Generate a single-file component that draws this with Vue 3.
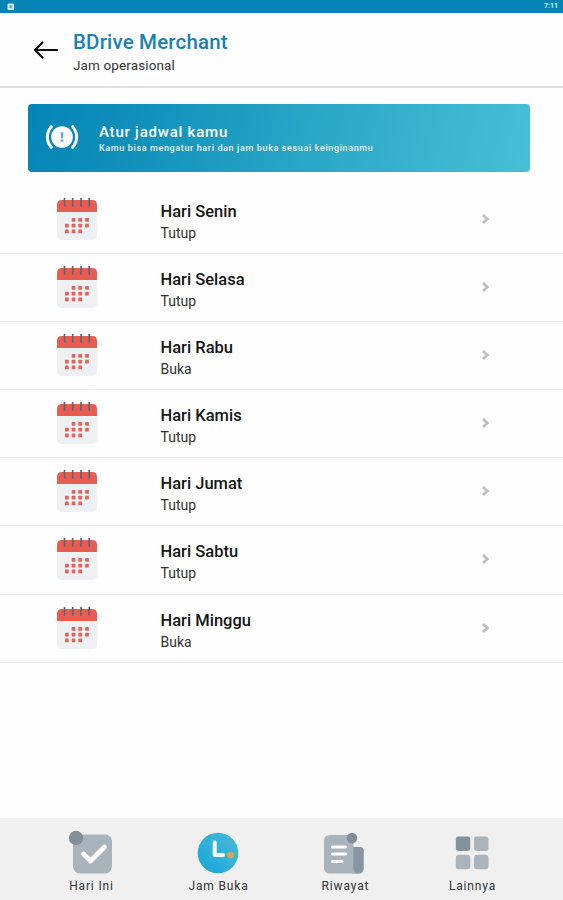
<script setup>
const days = [
  { name: 'Senin', status: 'Tutup' },
  { name: 'Selasa', status: 'Tutup' },
  { name: 'Rabu', status: 'Buka' },
  { name: 'Kamis', status: 'Tutup' },
  { name: 'Jumat', status: 'Tutup' },
  { name: 'Sabtu', status: 'Tutup' },
  { name: 'Minggu', status: 'Buka' },
]
const dots = [
  [15.7, 19], [22.4, 19], [29.1, 19],
  [9, 24.8], [15.7, 24.8], [22.4, 24.8], [29.1, 24.8],
  [9, 30.5], [15.7, 30.5], [22.4, 30.5],
]
const rings = [8.5, 16.7, 25, 33.2]
</script>

<template>
  <div class="screen">
    <div class="status">
      <svg class="status-icon" viewBox="0 0 8 8">
        <rect x="0.5" y="0.5" width="6.6" height="6.6" rx="1.3" fill="#d9f0f8" />
        <rect x="2.5" y="2.5" width="2.6" height="2.6" fill="#55abc9" />
      </svg>
      <span class="time">7:11</span>
    </div>

    <header class="header">
      <svg class="back" viewBox="0 0 26 20">
        <path d="M24 10H2M9.500 2.500L2 10l7.500 7.500" fill="none" stroke="#080808" stroke-width="2.200" stroke-linecap="round" stroke-linejoin="round" />
      </svg>
      <div class="heading">
        <h1>BDrive Merchant</h1>
        <p>Jam operasional</p>
      </div>
    </header>

    <section class="banner">
      <svg class="alert" viewBox="0 0 34 26">
        <circle cx="17" cy="13" r="10.800" fill="#fff" />
        <path d="M6.300 2.700A15.500 15.500 0 0 0 6.300 23.300M27.700 2.700A15.500 15.500 0 0 1 27.700 23.300" fill="none" stroke="#fff" stroke-width="3" stroke-linecap="round" />
        <path d="M15.500 8.200h3l-.5 5.700h-2zM15.600 15.500h2.800v2.300h-2.800z" fill="#5faeca" />
      </svg>
      <div class="banner-text">
        <h2>Atur jadwal kamu</h2>
        <p>Kamu bisa mengatur hari dan jam buka sesuai keinginanmu</p>
      </div>
    </section>

    <main class="list">
      <div v-for="day in days" :key="day.name" class="row">
        <svg class="calendar" viewBox="0 0 42 44">
          <path d="M1 14H41V38q0 5-5 5H6q-5 0-5-5z" fill="#edf1f3" />
          <path d="M1 15V8q0-5 5-5H36q5 0 5 5v7z" fill="#e85d50" />
          <path v-for="x in rings" :key="x" :d="`M${x} 1.500V9`" stroke="#656274" stroke-width="1.700" stroke-linecap="round" />
          <rect v-for="(dot, i) in dots" :key="'d' + i" :x="dot[0]" :y="dot[1] + 2" width="3.700" height="3.700" rx="0.500" fill="#e06458" />
        </svg>
        <div class="day">
          <h3>Hari {{ day.name }}</h3>
          <p>{{ day.status }}</p>
        </div>
        <svg class="chevron" viewBox="0 0 10 12">
          <path d="M2 2l4.300 4L2 10" fill="none" stroke="#bebebe" stroke-width="2.800" />
        </svg>
      </div>
    </main>

    <nav class="nav">
      <div class="tab">
        <svg viewBox="0 0 46 46">
          <rect x="5" y="4.500" width="39" height="39" rx="7" fill="#a9b3bb" />
          <circle cx="8" cy="8" r="7.200" fill="#808f9a" />
          <path d="M15.500 24l7 7L36.500 17" fill="none" stroke="#fff" stroke-width="4.800" stroke-linecap="round" stroke-linejoin="round" />
        </svg>
        <span>Hari Ini</span>
      </div>
      <div class="tab">
        <svg viewBox="0 0 46 46">
          <defs>
            <linearGradient id="clock-face" x1="1" y1="0" x2="0" y2="1">
              <stop offset="0" stop-color="#4abbd4" />
              <stop offset="1" stop-color="#18a5dc" />
            </linearGradient>
          </defs>
          <circle cx="23" cy="23" r="20.300" fill="url(#clock-face)" />
          <path d="M19.700 12.500V25H28" fill="none" stroke="#fff" stroke-width="4" stroke-linecap="round" stroke-linejoin="round" />
          <circle cx="35.500" cy="25" r="3.300" fill="#eba247" />
        </svg>
        <span>Jam Buka</span>
      </div>
      <div class="tab">
        <svg viewBox="0 0 46 46">
          <path d="M30 17H38q3.500 0 3.500 3.500V38q0 5.500-5.500 5.500H30z" fill="#8795a0" />
          <path d="M8 5H26q5.500 0 5.500 5.500V38q0 5.500 4.500 5.500H8q-6 0-6-6V11q0-6 6-6z" fill="#a9b3bb" />
          <path d="M31.500 17H38q3.500 0 3.500 3.500V38q0 5.500-5 5.500t-5-5.500z" fill="#8795a0" />
          <circle cx="30" cy="8" r="5.300" fill="#808f9a" />
          <path d="M10.500 17H23.500M10.500 24H23.500M10.500 31.500H20" stroke="#fff" stroke-width="3" stroke-linecap="round" />
        </svg>
        <span>Riwayat</span>
      </div>
      <div class="tab">
        <svg viewBox="0 0 46 46">
          <rect x="6.800" y="6.500" width="14.500" height="14.500" rx="3" fill="#84929c" />
          <rect x="25" y="6.500" width="14.500" height="14.500" rx="3" fill="#abb4bb" />
          <rect x="6.800" y="24.800" width="14.500" height="14.500" rx="3" fill="#abb4bb" />
          <rect x="25" y="24.800" width="14.500" height="14.500" rx="3" fill="#abb4bb" />
        </svg>
        <span>Lainnya</span>
      </div>
    </nav>
  </div>
</template>

<style>
body { margin: 0; }
</style>

<style scoped>
.screen {
  width: 563px;
  height: 900px;
  display: flex;
  flex-direction: column;
  overflow: hidden;
  background: #fefefe;
  color: #151515;
  font-family: Roboto, sans-serif;
}
h1, h2, h3, p { margin: 0; }
.status {
  flex: none;
  height: 13px;
  display: flex;
  align-items: center;
  justify-content: space-between;
  box-sizing: border-box;
  padding: 0 5px 0 7px;
  background: #0583b6;
}
.status-icon { width: 8px; height: 8px; }
.time { color: #d7edf5; font-size: 7px; line-height: 9px; font-weight: 700; }
.header {
  flex: none;
  display: flex;
  align-items: center;
  height: 75px;
  box-sizing: border-box;
  padding-left: 33px;
  border-bottom: 2px solid #dedede;
}
.back { width: 26px; height: 20px; }
.heading { padding: 5px 0 0 14px; }
h1 {
  color: #1b81b3;
  font-size: 20.500px;
  line-height: 25px;
  font-weight: 500;
  letter-spacing: 0.170px;
}
.heading p { color: #333; font-size: 13.500px; line-height: 20px; letter-spacing: 0.120px; }
.banner {
  flex: none;
  display: flex;
  align-items: center;
  width: 502px;
  height: 68px;
  margin: 16px 0 13px 28px;
  box-sizing: border-box;
  padding-left: 17px;
  border-radius: 4px;
  color: #fff;
  background: linear-gradient(105deg, #0585b7 0%, #0f8fba 20%, #2aa6c6 56%, #48bfd6 100%);
}
.alert { width: 34px; height: 26px; margin-top: -3px; }
.banner-text { padding: 2px 0 0 20px; }
h2 { font-size: 15px; line-height: 19px; font-weight: 500; letter-spacing: 0.780px; }
.banner-text p { font-size: 9px; line-height: 13px; font-weight: 500; letter-spacing: 0.630px; color: #e0f4fa; }
.list { flex: 1; }
.row {
  display: flex;
  height: 68.200px;
  box-sizing: border-box;
  padding-left: 56px;
  border-bottom: 1px solid #f0f0f0;
}
.list { padding-top: 0.500px; }
.calendar { width: 42px; height: 44px; margin-top: 11px; }
.day { box-sizing: border-box; width: 382.500px; padding: 15px 0 0 62.500px; }
h3 { font-size: 16.500px; line-height: 22px; font-weight: 500; }
.day p { font-size: 14px; line-height: 21px; color: #303030; letter-spacing: 0; }
.chevron { width: 10px; height: 12px; margin-top: 27px; }
.nav {
  flex: none;
  display: grid;
  grid-template-columns: repeat(4, 127px);
  justify-content: center;
  height: 82px;
  background: #f0f0f0;
}
.tab { display: flex; flex-direction: column; align-items: center; padding-top: 12px; }
.tab svg { width: 46px; height: 46px; }
.tab span { font-size: 12px; line-height: 16px; letter-spacing: 0.850px; margin-top: 2px; padding-left: 1px; color: #333; white-space: nowrap; }
</style>
